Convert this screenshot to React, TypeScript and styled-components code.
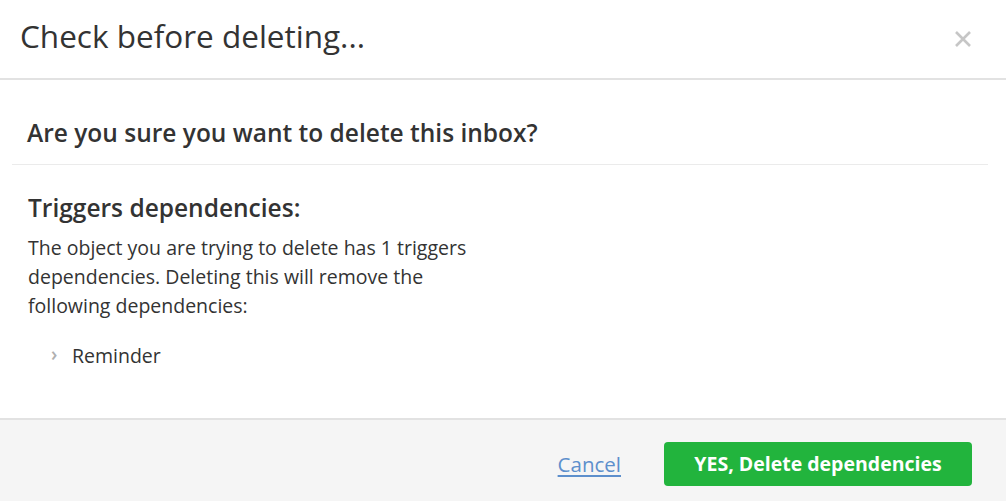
import React from 'react';
import styled, { createGlobalStyle } from 'styled-components';

const GlobalStyle = createGlobalStyle`
    html, body {
        margin: 0;
        padding: 0;
        background: #fff;
    }
    body {
        font-family: "Open Sans", Lato, sans-serif;
        color: #333;
    }
`;

const App = () => {
    return (
        <>
            <GlobalStyle />
            <Modal>
                <Header>
                    <Title>Check before deleting...</Title>
                    <Close aria-label="close">
                        <svg width="18" height="18" viewBox="0 0 18 18">
                            <path d="M2 2 L16 16 M16 2 L2 16" stroke="#c6c6c6" strokeWidth="2.6" />
                        </svg>
                    </Close>
                </Header>

                <Body>
                    <Question>Are you sure you want to delete this inbox?</Question>

                    <Section>
                        <SectionTitle>Triggers dependencies:</SectionTitle>
                        <Text>
                            The object you are trying to delete has 1 triggers dependencies. Deleting this will
                            remove the following dependencies:
                        </Text>
                        <DepList>
                            <DepItem>Reminder</DepItem>
                        </DepList>
                    </Section>
                </Body>

                <Footer>
                    <CancelLink href="#">Cancel</CancelLink>
                    <ConfirmButton>YES, Delete dependencies</ConfirmButton>
                </Footer>
            </Modal>
        </>
    )
}


const Modal = styled.div`
    display: flex;
    flex-direction: column;
    width: 1006px;
    height: 501px;
    background: #fff;
    overflow: hidden;
`;

const Header = styled.div`
    display: flex;
    align-items: center;
    justify-content: space-between;
    height: 78px;
    padding: 0 34px 0 20px;
    border-bottom: 2px solid #e2e2e2;
    flex-shrink: 0;
`;

const Title = styled.h1`
    margin: 0;
    font-size: 31.5px;
    font-weight: 400;
    color: #333;
    position: relative;
    top: -4px;
`;

const Close = styled.button`
    border: none;
    background: none;
    padding: 0;
    cursor: pointer;
    display: flex;
`;

const Body = styled.div`
    flex: 1;
    padding: 0 18px 0 12px;
`;

const Question = styled.h2`
    margin: 0;
    height: 85px;
    padding: 20px 15px 0;
    box-sizing: border-box;
    display: flex;
    align-items: center;
    font-size: 24.5px;
    font-weight: 600;
    color: #333;
    border-bottom: 1px solid #ebebeb;
`;

const Section = styled.div`
    padding: 27px 16px 0;
`;

const SectionTitle = styled.h3`
    margin: 0 0 9px;
    font-size: 24.5px;
    font-weight: 600;
    line-height: 32px;
    color: #333;
`;

const Text = styled.p`
    margin: 0;
    max-width: 475px;
    font-size: 19.5px;
    line-height: 29px;
    color: #333;
`;

const DepList = styled.ul`
    list-style: none;
    margin: 21px 0 0;
    padding: 0 0 0 24px;
`;

const DepItem = styled.li`
    position: relative;
    padding-left: 20px;
    font-size: 19.5px;
    line-height: 29px;

    &::before {
        content: '›';
        position: absolute;
        left: -1px;
        top: -1px;
        color: #b0b0b0;
        font-size: 19px;
        font-weight: 600;
    }
`;

const Footer = styled.div`
    display: flex;
    align-items: center;
    justify-content: flex-end;
    gap: 43px;
    height: 83px;
    padding: 6px 34px 0 0;
    box-sizing: border-box;
    background: #f5f5f5;
    border-top: 2px solid #e2e2e2;
    flex-shrink: 0;
`;

const CancelLink = styled.a`
    font-size: 20.5px;
    color: #5d8fcc;
    text-decoration: underline;
    text-underline-offset: 3px;
`;

const ConfirmButton = styled.button`
    width: 308px;
    height: 44px;
    border: none;
    border-radius: 4px;
    background: #22b43d;
    color: #fff;
    font-family: "Open Sans", Lato, sans-serif;
    font-size: 19.5px;
    font-weight: 700;
    cursor: pointer;
`;


export default App
